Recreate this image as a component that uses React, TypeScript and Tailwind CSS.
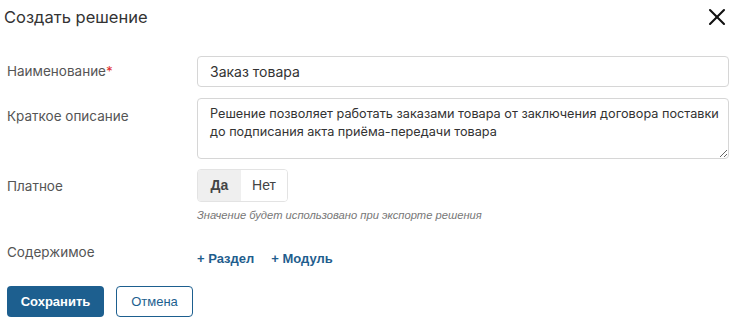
import { X } from "lucide-react";

export default function App() {
  return (
    <div className="min-h-[325px] w-[736px] bg-white px-[7px] font-[family-name:Inter,sans-serif]">
      <div className="flex h-[34px] items-center justify-between">
        <h1 className="-ml-[3px] text-[16.5px] font-normal text-[#333333]">Создать решение</h1>
        <button className="-mr-[2px] text-[#111111]">
          <X className="size-[28px]" strokeWidth={1.8} />
        </button>
      </div>

      <div className="mt-[22px] flex items-center">
        <div className="w-[190px] shrink-0 text-[13.5px] text-[#555555]">
          Наименование<span className="text-[#e03131]">*</span>
        </div>
        <input
          className="h-[31px] flex-1 rounded-[4px] border border-[#d6d6d6] px-[12px] text-[14px] text-[#333333] outline-none"
          defaultValue="Заказ товара"
        />
      </div>

      <div className="mt-[11px] flex items-start">
        <div className="w-[190px] shrink-0 pt-[8px] text-[13.5px] text-[#555555]">Краткое описание</div>
        <textarea
          className="h-[61px] flex-1 rounded-[4px] border border-[#d6d6d6] py-[6px] pl-[12px] pr-0 text-[12.7px] leading-[18px] text-[#333333] outline-none"
          defaultValue="Решение позволяет работать заказами товара от заключения договора поставки до подписания акта приёма-передачи товара"
        />
      </div>

      <div className="mt-[10px] flex items-start">
        <div className="w-[190px] shrink-0 pt-[7px] text-[13.5px] text-[#555555]">Платное</div>
        <div>
          <div className="flex h-[33px] w-[91px] overflow-hidden rounded-[4px] border border-[#e3e3e3] font-[family-name:'Liberation_Sans',Arial,sans-serif] text-[14px]">
            <button className="w-[43px] bg-[#efefef] font-bold text-[#444444]">Да</button>
            <button className="flex-1 bg-white text-[#444444]">Нет</button>
          </div>
          <p className="mt-[5px] font-[family-name:'Liberation_Sans',Arial,sans-serif] text-[11.2px] italic text-[#777777]">
            Значение будет использовано при экспорте решения
          </p>
        </div>
      </div>

      <div className="mt-[18px] flex items-start">
        <div className="w-[190px] shrink-0 text-[13.5px] text-[#555555]">Содержимое</div>
        <div className="mt-[7px] flex gap-[17px] font-[family-name:'Liberation_Sans',Arial,sans-serif] text-[13px] font-bold text-[#1f5e8e]">
          <button>+ Раздел</button>
          <button>+ Модуль</button>
        </div>
      </div>

      <div className="mt-[18px] flex gap-[12px] font-[family-name:'Liberation_Sans',Arial,sans-serif] text-[13px]">
        <button className="h-[31px] w-[97px] rounded-[4px] bg-[#1d5f8f] font-bold text-white">Сохранить</button>
        <button className="h-[31px] w-[77px] rounded-[4px] border border-[#1d5f8f] bg-white text-[#1d5f8f]">Отмена</button>
      </div>
    </div>
  );
}
